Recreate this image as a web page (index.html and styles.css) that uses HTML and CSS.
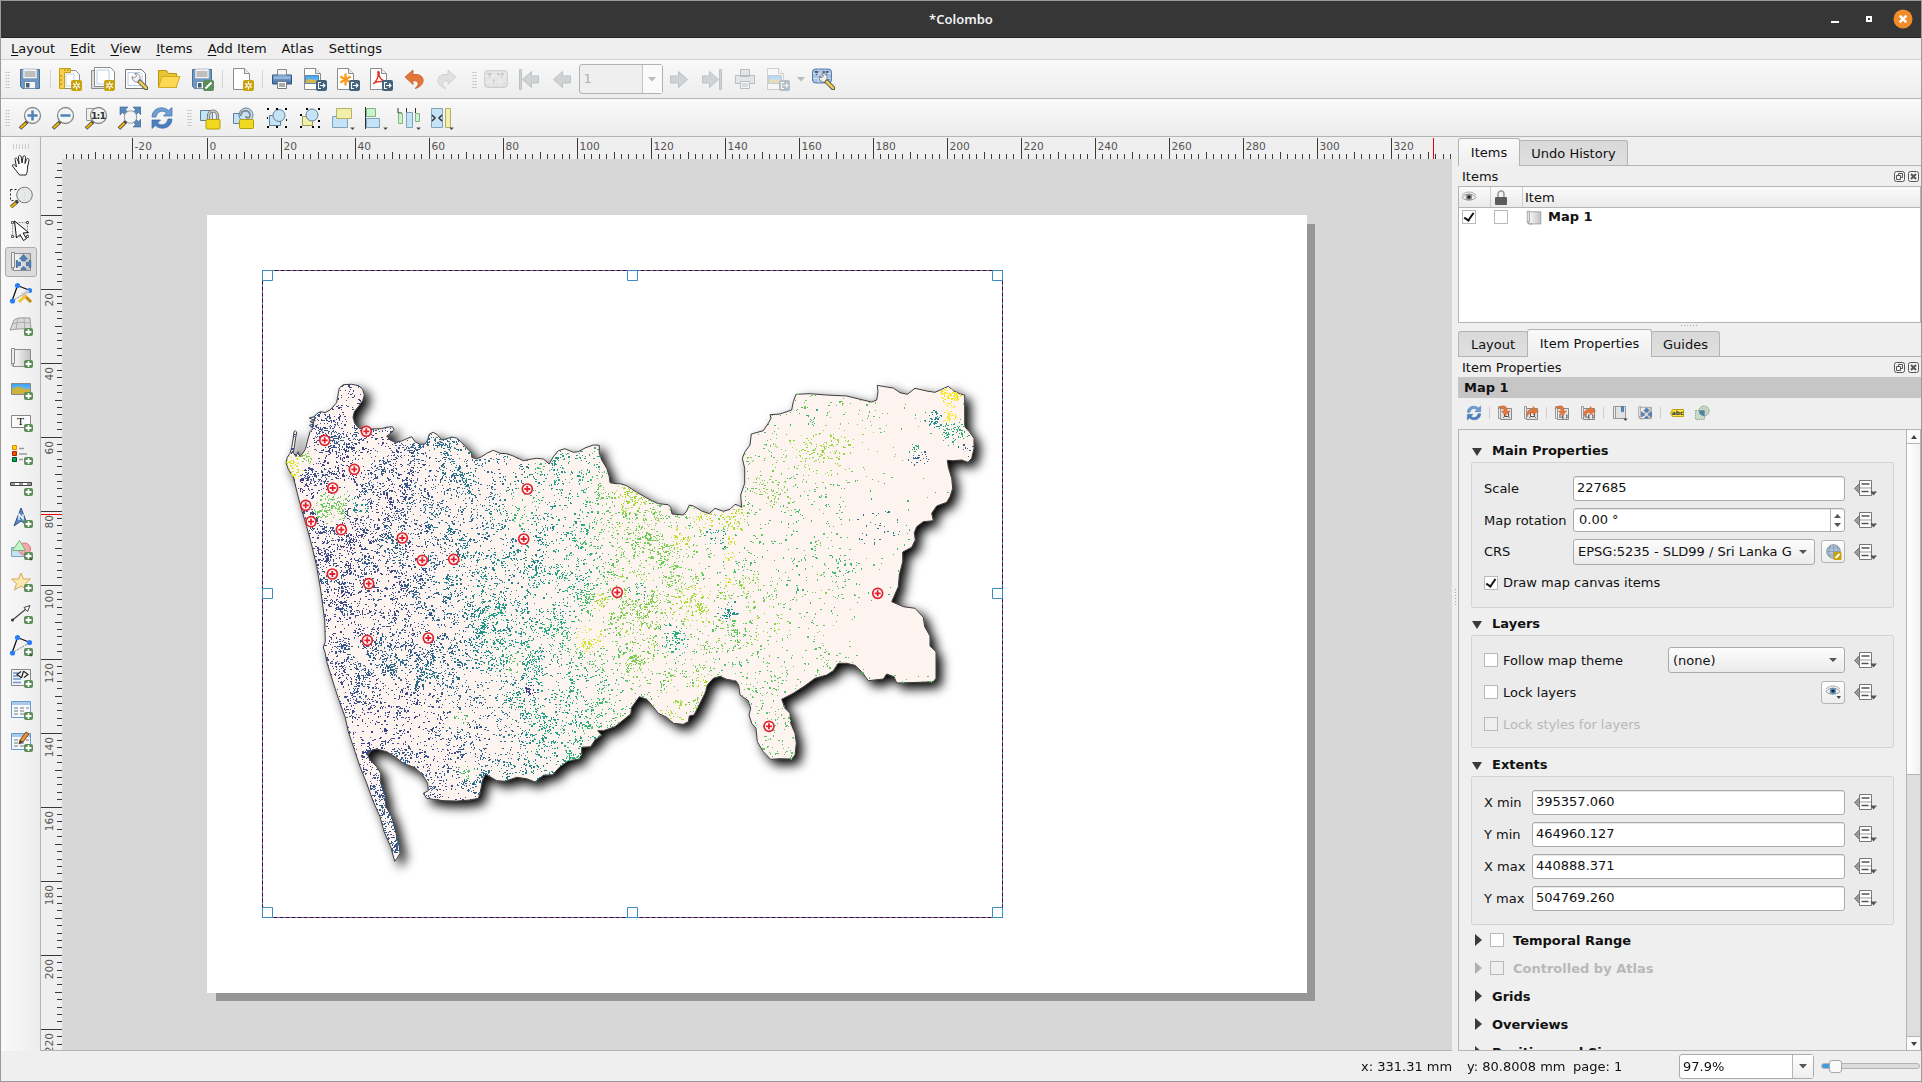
FILE: index.html
```html
<!DOCTYPE html>
<html lang="en">
<head>
<meta charset="utf-8">
<title>*Colombo</title>
<link rel="stylesheet" href="styles.css">
</head>
<body>
<svg class="defs" width="0" height="0">
  <defs>
    <linearGradient id="gsheet"><stop offset="0" stop-color="#fafafa"/><stop offset="1" stop-color="#c2c2c2"/></linearGradient>
    <linearGradient id="gsky" x2="0" y2="1"><stop offset="0" stop-color="#3ba0ee"/><stop offset="1" stop-color="#8fd0f2"/></linearGradient>
    <linearGradient id="gblue" x2="0" y2="1"><stop offset="0" stop-color="#8fb4dc"/><stop offset="1" stop-color="#3a6ba8"/></linearGradient>
    <symbol id="plus" viewBox="0 0 9 8"><rect width="9" height="8" rx="2" fill="#5b8c5a"/><path d="M4.500 1.300v5.400M1.600 4h5.800" stroke="#fff" stroke-width="1.800"/></symbol>
    <symbol id="gear" viewBox="0 0 11 11"><rect width="11" height="11" rx="2" fill="#c8a20a"/><path d="M5.500 1.500v8M2 3.500l7 4M2 7.500l7-4" stroke="#fff" stroke-width="1.300"/><circle cx="5.500" cy="5.500" r="1.600" fill="#c8a20a" stroke="#fff"/></symbol>
    <symbol id="exp" viewBox="0 0 11 11"><rect width="11" height="11" rx="2" fill="#42627c"/><path d="M5 2.500H2.500v6H5M4 5.500h5M7 3.500l2 2-2 2" stroke="#fff" fill="none" stroke-width="1.100"/></symbol>
    <symbol id="page" viewBox="0 0 24 24"><path d="M3.500 1.500h11l5 5v16h-16z" fill="#fff" stroke="#8c8c8c"/><path d="M14.500 1.500v5h5" fill="#eee" stroke="#8c8c8c"/></symbol>
    <symbol id="dd" viewBox="0 0 6 4"><path d="M0 .5h6L3 4z" fill="#444"/></symbol>
    <symbol id="glass" viewBox="0 0 24 24"><path d="M10 15L2 22.500" stroke="#4a4a4a" stroke-width="3.600"/><path d="M8 17L2.500 22" stroke="#f2b705" stroke-width="2"/><circle cx="14.500" cy="9.500" r="8" fill="#f3f5f5" stroke="#858a8a" stroke-width="1.300"/></symbol>

    <symbol id="i-save" viewBox="0 0 24 24"><path d="M2.500 2.500h19v19h-17l-2-2z" fill="#6d98c6" stroke="#4c7199"/><rect x="5" y="2" width="14" height="9.500" fill="#f4f4f4" stroke="#8da0b2" stroke-width=".6"/><path d="M6.500 5h11M6.500 7h11M6.500 9h11" stroke="#888"/><rect x="6.500" y="14.500" width="11" height="7" fill="#f4f4f4" stroke="#7890a8"/><rect x="8" y="16" width="3.500" height="4.500" fill="#42627c"/></symbol>
    <symbol id="i-saveas" viewBox="0 0 24 24"><use href="#i-save"/><rect x="13" y="13" width="11" height="11" rx="2" fill="#5b8c5a"/><path d="M15.500 21.500l6-6" stroke="#fff" stroke-width="2"/></symbol>
    <symbol id="i-newlayout" viewBox="0 0 24 24"><path d="M5.500 3.500h12l4 4v14h-16z" fill="#fff" stroke="#8c8c8c"/><path d="M8 7h8v12H8z" fill="none" stroke="#c2d4ee"/><path d="M1.500 1.500h11v4h-6v16h-5z" fill="#f5cf4c" stroke="#c8a20a"/><path d="M2 9h2M2 13h2M2 17h2M7 2v2M10 2v2" stroke="#a3850a"/><use href="#gear" x="13" y="13" width="11" height="11"/></symbol>
    <symbol id="i-dup" viewBox="0 0 24 24"><path d="M.5 3.500h3v16h15v2H.5z" fill="#ddd" stroke="#8c8c8c"/><path d="M3.500.5h16l4 4v15h-20z" fill="#fff" stroke="#8c8c8c"/><path d="M6 3h12v14H6z" fill="none" stroke="#b8cdec"/><use href="#gear" x="13" y="13" width="11" height="11"/></symbol>
    <symbol id="wrench" viewBox="0 0 18 18"><path d="M8 8l8 8" stroke="#555" stroke-width="4.600" stroke-linecap="round"/><path d="M9.500 9.500l6.300 6.300" stroke="#f0d050" stroke-width="2.800" stroke-linecap="round"/><path d="M1 4l3 1 2-2-2-2.500c4-.5 6 2.500 5.500 5.500L7 9.500C4 10 1 7.500 1 4z" fill="#f2f2f2" stroke="#777" stroke-width=".9"/></symbol>
    <symbol id="i-manager" viewBox="0 0 24 24"><path d="M1.500 2.500h16l4 4v15h-20z" fill="#fff" stroke="#777"/><path d="M4 5.500h12l2 2v11H4z" fill="none" stroke="#b8cdec"/><use href="#wrench" x="7" y="6" width="17" height="17"/></symbol>
    <symbol id="i-open" viewBox="0 0 24 24"><path d="M1.500 3.500h8l2 3h8v14h-18z" fill="#e9c535" stroke="#b8960f"/><path d="M5 9.500h18l-4 11H1.500z" fill="#fbd953" stroke="#d3ab1c"/></symbol>
    <symbol id="i-newpage" viewBox="0 0 24 24"><use href="#page"/><use href="#gear" x="13" y="13" width="11" height="11"/></symbol>
    <symbol id="i-print" viewBox="0 0 24 24"><path d="M7.500 2.500h9v7h-9z" fill="#f4f4f4" stroke="#8c8c8c"/><path d="M2.500 8h19v9h-19z" fill="url(#gblue)" stroke="#31597f"/><path d="M7.500 8h9M4 11h16" stroke="#c8dcf0" stroke-width=".8"/><path d="M7.500 14.500h9v7h-9z" fill="#fff" stroke="#777"/><path d="M9 17h6M9 19h6" stroke="#555"/></symbol>
    <symbol id="i-printg" viewBox="0 0 24 24"><g fill="#e3e5e7" stroke="#b9bdc0"><path d="M7.500 2.500h9v7h-9zM2.500 8.500h19v8h-19z"/><path d="M7.500 14.500h9v7h-9z" fill="#f6f6f6"/><path d="M9 17h6M9 19h6"/></g></symbol>
    <symbol id="pic" viewBox="0 0 16 10" preserveAspectRatio="none"><path d="M.5.500h15v9H.5z" fill="url(#gsky)" stroke="#5878a0"/><path d="M1 6l4-1.500 5 1 5 .5v3H1z" fill="#d2b94c"/></symbol>
    <symbol id="i-eimg" viewBox="0 0 24 24"><use href="#page" x="-2"/><use href="#pic" x="2" y="8" width="14" height="9"/><use href="#exp" x="13" y="13" width="11" height="11"/></symbol>
    <symbol id="i-esvg" viewBox="0 0 24 24"><use href="#page" x="-2"/><path d="M9.500 6.500v12M4.300 9.500l10.400 6M4.300 15.500l10.400-6" stroke="#f99b1c" stroke-width="2.300"/><use href="#exp" x="13" y="13" width="11" height="11"/></symbol>
    <symbol id="i-epdf" viewBox="0 0 24 24"><use href="#page" x="-2"/><path d="M4 17c3-2 6-7 5-11-1-2 2-2 1 1 0 4 3 7 7 7 2 2-6-1-12 2" fill="none" stroke="#e23b2e" stroke-width="1.500"/><use href="#exp" x="13" y="13" width="11" height="11"/></symbol>
    <symbol id="i-eimgg" viewBox="0 0 24 24"><g opacity=".35"><use href="#i-eimg" width="24" height="24"/></g></symbol>
    <symbol id="i-undo" viewBox="0 0 24 24"><path d="M3 10l8-7v4.500h4c9 1 8 12-2 14 5-4 4-8-2-8v4z" fill="#e2773b" stroke="#c65f26" stroke-width=".8"/></symbol>
    <symbol id="i-redo" viewBox="0 0 24 24"><path d="M21 10l-8-7v4.500H9C0 8.500 1 19.500 11 21.500c-5-4-4-8 2-8v4z" fill="#dfe1e1" stroke="#cbcdcd" stroke-width=".8"/></symbol>
    <symbol id="world" viewBox="0 0 24 18"><rect x=".7" y=".7" width="22.600" height="16.600" rx="3.500" fill="#a9c4e8" stroke="#4d74a8" stroke-width="1.200"/><path d="M3 3h6l-2 4-2 1zM8 9l3 1-2 5zM13 3h7l-1 4-3 1-2-3-1 1zM18 12h3v2z" fill="#4d6078"/><path d="M1 6h22M1 12h22M8 1v16M16 1v16" stroke="#e6eef8" stroke-width=".8"/></symbol>
    <symbol id="i-atlas" viewBox="0 0 24 24"><g opacity=".27" style="filter:grayscale(1)"><use href="#world" y="3" width="24" height="18"/></g></symbol>
    <symbol id="i-atlasset" viewBox="0 0 24 24"><use href="#world" x="1" y="1" width="20" height="16"/><use href="#wrench" x="7" y="6" width="17" height="17"/></symbol>
    <symbol id="i-prev" viewBox="0 0 24 24"><path d="M3.500 12.500l9-8v4.500h8v7h-8v4.500z" fill="#cfd3d6" stroke="#bcc1c4"/></symbol>
    <symbol id="i-next" viewBox="0 0 24 24"><path d="M20.500 12.500l-9-8v4.500h-8v7h8v4.500z" fill="#cfd3d6" stroke="#bcc1c4"/></symbol>
    <symbol id="i-first" viewBox="0 0 24 24"><path d="M2.500 2.500h2v20h-2zM5.500 12.500l9-8v4.500h7v7h-7v4.500z" fill="#cfd3d6" stroke="#bcc1c4"/></symbol>
    <symbol id="i-last" viewBox="0 0 24 24"><path d="M19.500 2.500h2v20h-2zM18.500 12.500l-9-8v4.500h-7v7h7v4.500z" fill="#cfd3d6" stroke="#bcc1c4"/></symbol>

    <symbol id="i-zin" viewBox="0 0 24 24"><use href="#glass"/><path d="M14.500 4.500v10M9.500 9.500h10" stroke="#4f7fb8" stroke-width="2.500"/></symbol>
    <symbol id="i-zout" viewBox="0 0 24 24"><use href="#glass"/><path d="M9.500 9.500h10" stroke="#4f7fb8" stroke-width="2.500"/></symbol>
    <symbol id="i-z11" viewBox="0 0 24 24"><path d="M2.500 2.500h9v12h-9z" fill="#f0f0f0" stroke="#999"/><use href="#glass"/><text x="14" y="13" font-size="9.500" font-weight="bold" text-anchor="middle" fill="#333" letter-spacing="-1">1:1</text></symbol>
    <symbol id="i-zfull" viewBox="0 0 24 24"><path d="M4 1h7L8.500 3.500l3 3-3 3-3-3L3 9V1zM23 1h-7l2.500 2.500-3 3 3 3 3-3L24 9V1zM24 21h-8l2.500-2.500-3-3 3-3 3 3L24 13z" fill="#5b86b8" stroke="#3f6797" stroke-width=".6"/><path d="M10 14.500l-8 8" stroke="#444" stroke-width="3.600"/><path d="M7.500 17L2.500 22" stroke="#f2b705" stroke-width="2"/><circle cx="13.500" cy="11" r="6.200" fill="#f3f5f5" stroke="#999"/></symbol>
    <symbol id="i-refresh" viewBox="0 0 24 24"><path d="M2 11C2 2 13-1 18.500 4.500L22 1.500V10h-8.500l3-3C12 3 7 6 6 11z" fill="#6e9fd4" stroke="#3e6ea6" stroke-width=".7"/><path d="M22 13c0 9-11 12-16.500 6.500L2 22.500V14h8.500l-3 3c4.500 4 9.500 1 10.500-4z" fill="#4a7fbe" stroke="#3e6ea6" stroke-width=".7"/></symbol>
    <symbol id="padlock" viewBox="0 0 16 21"><path d="M3.500 11V7a4.500 5 0 0 1 9 0v4" fill="none" stroke="#777" stroke-width="3.200"/><path d="M3.500 11V7a4.500 5 0 0 1 9 0v4" fill="none" stroke="#ccc" stroke-width="1.500"/><rect x="1" y="10.500" width="14" height="9.500" rx="1" fill="#f0d91e" stroke="#b39f0c"/></symbol>
    <symbol id="i-lock" viewBox="0 0 24 24"><path d="M1.500 4.500h12v10h-12z" fill="#c5e3f6" stroke="#5c8199"/><use href="#padlock" x="6" y="3" width="16" height="21"/></symbol>
    <symbol id="i-unlock" viewBox="0 0 24 24"><path d="M1.500 7.500h8v10h-8z" fill="#c5e3f6" stroke="#5c8199"/><circle cx="14" cy="9" r="7" fill="#c5e3f6" stroke="#5c8199"/><path d="M9 10c-1-7 10-7 9 0-1 3-4 2-4 0" fill="none" stroke="#888" stroke-width="2"/><rect x="7.500" y="13.500" width="14" height="9" rx="1" fill="#f0d91e" stroke="#b39f0c"/></symbol>
    <symbol id="i-group" viewBox="0 0 24 24"><path d="M4.500 9.500h11v10h-11z" fill="#c5e3f6" stroke="#5c8199"/><circle cx="14" cy="9.500" r="6" fill="#c5e3f6" stroke="#5c8199"/><path d="M2 3h2M20 3h2M2 21h2M20 21h2M2 12h1M21 14h1M11 3h2M11 21h2" stroke="#000" stroke-width="2"/></symbol>
    <symbol id="i-ungroup" viewBox="0 0 24 24"><path d="M4.500 10.500h10v9h-10z" fill="#f2efa8" stroke="#a09b4c"/><circle cx="14" cy="9" r="6" fill="#c5e3f6" stroke="#5c8199"/><path d="M2 9h2M8 3h2M20 3h2M2 21h2M14 21h2M20 15h2M20 21h2" stroke="#000" stroke-width="2"/></symbol>
    <symbol id="i-raise" viewBox="0 0 24 24"><path d="M1.500 10.500h15v11h-15z" fill="#c5e3f6" stroke="#7ea2bc"/><path d="M5.500 2.500h15v10h-15z" fill="#f2efa8" stroke="#b5b06a"/><use href="#dd" x="19" y="21" width="5" height="3"/></symbol>
    <symbol id="i-align" viewBox="0 0 24 24"><path d="M1.500 1v22" stroke="#333" stroke-width="1"/><path d="M2.500 2.500h9v8h-9z" fill="#c5f5c8" stroke="#83b487"/><path d="M2.500 12.500h13v9h-13z" fill="#c5e3f6" stroke="#7ea2bc"/><use href="#dd" x="19" y="21" width="5" height="3"/></symbol>
    <symbol id="i-dist" viewBox="0 0 24 24"><path d="M1 2v5h4M9.500 2v5M18.500 2v5" stroke="#333" fill="none"/><path d="M1.500 7.500h4v10h-4zM18.500 7.500h4v8h-4z" fill="#c5f5c8" stroke="#83b487"/><path d="M9.500 6.500h6v15h-6z" fill="#c5e3f6" stroke="#7ea2bc"/><use href="#dd" x="19" y="21" width="5" height="3"/></symbol>
    <symbol id="i-resize" viewBox="0 0 24 24"><path d="M1.500 2.500h11v19h-11z" fill="#c5e3f6" stroke="#7ea2bc"/><path d="M15.500 2.500h5v19h-5z" fill="#f2efa8" stroke="#b5b06a"/><path d="M2 9l3 3-3 3M12 9l-3 3 3 3" fill="none" stroke="#333" stroke-width="1.500"/><use href="#dd" x="19" y="21" width="5" height="3"/></symbol>

    <symbol id="i-hand" viewBox="0 0 24 24"><path d="M9 22c-2-3-5-6-7-9-.5-2 2-2 4 1L4.500 6.500c0-2 2-2 2.500 0L8.500 11 8 4c0-2 2.300-2 2.700 0L11.500 10l1-6c.3-2 2.500-1.600 2.500.3l-.5 6.200 1.500-4c.7-2 2.700-1 2.500.8L17 14c0 4-.5 6-1.500 8z" transform="translate(1.500 -1)" fill="#fff" stroke="#222" stroke-width="1"/></symbol>
    <symbol id="i-zoom" viewBox="0 0 24 24"><path d="M1.500 3.500h14v11h-14z" fill="none" stroke="#222" stroke-dasharray="2 2"/><path d="M9 15l-7 6" stroke="#444" stroke-width="3.500"/><path d="M7 17l-5 4" stroke="#f2b705" stroke-width="2"/><circle cx="15.500" cy="9" r="7.800" fill="#e6e8e8" fill-opacity=".92" stroke="#777"/></symbol>
    <symbol id="i-select" viewBox="0 0 24 24"><path d="M3.500 4.500h15v14h-15z" fill="#eee" stroke="#999" stroke-dasharray="2 1"/><path d="M2.500 3.500h2v2h-2zM17.500 3.500h2v2h-2zM2.500 17.500h2v2h-2zM17.500 17.500h2v2h-2z" fill="#fff" stroke="#555"/><path d="M5.500 3l2 17 3.500-3.500 3.500 6 3-2-3.500-5.500 5.500-.5z" fill="#fff" stroke="#111"/></symbol>
    <symbol id="sheet" viewBox="0 0 24 24"><path d="M4.500 3.500h17v17h-17z" fill="url(#gsheet)" stroke="#8c8c8c"/><path d="M2.500 2.500h3v15h-3z" fill="#eee" stroke="#8c8c8c"/><path d="M2.500 17.500q0 3 3 3h4" fill="none" stroke="#8c8c8c"/></symbol>
    <symbol id="fourway" viewBox="0 0 16 16"><path d="M8 .5L12 5H9.800v2H6.200V5H4zM5.500 15.500v-1L8 12.500l2.500 2v1zM.5 6.500h1.500v1.700h3v3.600h-3v1.700H.5zM15.500 6.500H14v1.700h-3v3.600h3v1.700h1.500z" fill="#4f81bb" stroke="#2f5b8f" stroke-width=".6"/></symbol>
    <symbol id="i-move" viewBox="0 0 24 24"><use href="#sheet" width="24" height="24"/><use href="#fourway" x="6.500" y="4" width="16" height="16"/></symbol>
    <symbol id="tri" viewBox="0 0 24 24"><path d="M3 19L8.500 3.500 21 8.500" fill="none" stroke="#111" stroke-width="1.300"/><path d="M3 19L21 8.500" stroke="#777" stroke-dasharray="2 1"/><circle cx="3.500" cy="19" r="2.600" fill="#2b7df5"/><circle cx="8.500" cy="3.500" r="2.600" fill="#2b7df5"/><circle cx="20.500" cy="8.500" r="2.600" fill="#2b7df5"/></symbol>
    <symbol id="i-nodes" viewBox="0 0 24 24"><use href="#tri"/><path d="M15 13l7 7" stroke="#c58a10" stroke-width="3"/><path d="M17 13l-7 7" stroke="#f2c530" stroke-width="3"/><path d="M20 9l-7 4" stroke="#c8c8c8" stroke-width="3"/></symbol>
    <symbol id="i-3d" viewBox="0 0 24 24"><path d="M5 6c4-3 10-2 16-2l1 12c-7-2-14-1-21 0z" fill="#d9d9d9" stroke="#999"/><path d="M4 10c6-3 12-1 18-1M9 4L7 15M15 4l1 12" fill="none" stroke="#aaa"/><use href="#plus" x="15" y="14" width="9" height="8"/></symbol>
    <symbol id="i-map" viewBox="0 0 24 24"><use href="#sheet" width="24" height="24"/><use href="#plus" x="15" y="14" width="9" height="8"/></symbol>
    <symbol id="i-pic" viewBox="0 0 24 24"><path d="M2.500 5.500h19v11h-19z" fill="url(#gsky)" stroke="#888"/><path d="M3 11l6-2.500 8 2.500 4 .5V16H3z" fill="#cbb33e"/><use href="#plus" x="15" y="14" width="9" height="8"/></symbol>
    <symbol id="i-label" viewBox="0 0 24 24"><path d="M2.500 5.500h19v12h-19z" fill="#fafafa" stroke="#888"/><text x="11.500" y="15" text-anchor="middle" class="serif" font-size="10">T</text><use href="#plus" x="15" y="14" width="9" height="8"/></symbol>
    <symbol id="i-legend" viewBox="0 0 24 24"><path d="M3.500 3.500h4v4h-4z" fill="#ffd500" stroke="#e08a00"/><path d="M3.500 9.500h4v4h-4z" fill="#ff4b0a" stroke="#a02a00"/><path d="M3.500 15.500h4v4h-4z" fill="#00a854" stroke="#004e28"/><path d="M10 6.500h5M10 12h8M10 17.500h4" stroke="#999" stroke-width="1.500"/><use href="#plus" x="15" y="15" width="9" height="8"/></symbol>
    <symbol id="i-scale" viewBox="0 0 24 24"><path d="M1.500 8.500h21v3h-21z" fill="#fff" stroke="#444"/><path d="M2 10h4M10 10h4M18 10h4" stroke="#999" stroke-width="2"/><use href="#plus" x="15" y="14" width="9" height="8"/></symbol>
    <symbol id="i-north" viewBox="0 0 24 24"><path d="M12 2l7 18-7-5-7 5z" fill="#5b8bc0" stroke="#2d5580"/><path d="M10 14V8l4 5V8" fill="none" stroke="#fff" stroke-width="1.300"/><use href="#plus" x="15" y="14" width="9" height="8"/></symbol>
    <symbol id="i-shape" viewBox="0 0 24 24"><path d="M2.500 9.500h13v9h-13z" fill="#c5e3f6" stroke="#7ea2bc"/><circle cx="15.500" cy="11" r="6" fill="#f6a9a9" stroke="#d97878"/><path d="M10.500 2.500l6 10h-13z" fill="#c5f5c8" stroke="#76b07b"/><use href="#plus" x="15" y="14" width="9" height="8"/><use href="#dd" x="20" y="20" width="4" height="3"/></symbol>
    <symbol id="i-star" viewBox="0 0 24 24"><path d="M12 3l2.500 6h7l-5 4.500 2 6.500-6.500-4-6.500 4 2-6.500-5-4.500h7z" fill="#fbe9b0" stroke="#dca55e"/><use href="#plus" x="15" y="14" width="9" height="8"/></symbol>
    <symbol id="i-arrow" viewBox="0 0 24 24"><path d="M3 18.500L17 7" stroke="#444" stroke-width="1.200"/><circle cx="3.500" cy="18" r="1.500" fill="#333"/><path d="M21 3.500l-6 2 3.500 4z" fill="#fff" stroke="#444"/><use href="#plus" x="15" y="14" width="9" height="8"/></symbol>
    <symbol id="i-poly" viewBox="0 0 24 24"><use href="#tri"/><use href="#plus" x="15" y="14" width="9" height="8"/><use href="#dd" x="20" y="20" width="4" height="3"/></symbol>
    <symbol id="i-html" viewBox="0 0 24 24"><path d="M2.500 3.500h19v16h-19z" fill="#f4f4f4" stroke="#888"/><path d="M4 7h5M4 10h5M4 13h8M4 16.500h8" stroke="#6a98d0" stroke-width="1.500"/><path d="M12 5.500L8 8.500l4 3M15 5.500l4 3-4 3M14.500 5l-2 7" stroke="#222" fill="none" stroke-width="1.200"/><use href="#plus" x="15" y="14" width="9" height="8"/></symbol>
    <symbol id="table" viewBox="0 0 24 24"><path d="M2.500 3.500h19v16h-19z" fill="#f6f9fd" stroke="#6a98d0"/><path d="M3 5.500h18" stroke="#a9c8ea" stroke-width="3"/><path d="M5 10h4M11 10h4M17 10h3M5 13h4M11 13h4M5 16h4M11 16h4" stroke="#777" stroke-width="1.200"/></symbol>
    <symbol id="i-table" viewBox="0 0 24 24"><use href="#table"/><use href="#plus" x="15" y="14" width="9" height="8"/></symbol>
    <symbol id="i-ftable" viewBox="0 0 24 24"><use href="#table"/><path d="M10 14l1-4 6-8 3 2-6 8z" fill="#e7913c" stroke="#80501c"/><path d="M10 14l1-4 3 2z" fill="#444"/><use href="#plus" x="15" y="14" width="9" height="8"/></symbol>

    <symbol id="i-float" viewBox="0 0 11 11"><rect x=".5" y=".5" width="10" height="10" rx="2" fill="#f4f4f4" stroke="#555"/><path d="M4.500 4.500v-2h4v4h-2M2.500 4.500h4v4h-4z" fill="none" stroke="#555"/></symbol>
    <symbol id="i-close" viewBox="0 0 11 11"><rect x=".5" y=".5" width="10" height="10" rx="2" fill="#f4f4f4" stroke="#555"/><path d="M3 3l5 5M8 3L3 8" stroke="#555" stroke-width="2"/></symbol>
    <symbol id="i-eye" viewBox="0 0 16 12"><path d="M1 6.500C4 2 12 2 15 6.500 12 10 4 10 1 6.500z" fill="#f4f4f4" stroke="#999"/><path d="M1 4c4-4 10-4 14 0" fill="none" stroke="#aaa"/><circle cx="8" cy="6" r="3.200" fill="var(--iris,#8a8f8f)"/><circle cx="8" cy="6" r="1.600" fill="#222"/></symbol>
    <symbol id="i-padg" viewBox="0 0 12 15"><path d="M3 8V4.500a3 3.500 0 0 1 6 0V8" fill="none" stroke="#999" stroke-width="1.600"/><rect y="7" width="12" height="8" rx="1" fill="#5c5c5c"/></symbol>
    <symbol id="toview" viewBox="0 0 16 16"><path d="M3.500 3.500h11v11h-11z" fill="#e0e0e0" stroke="#888"/><path d="M1.500 1.500h2v12h-2z" fill="#eee" stroke="#999"/><path d="M6 6l7 7M13 6l-7 7" stroke="#777"/><path d="M7.500 7.500h4v4h-4z" fill="#f4f4f4" stroke="#555"/></symbol>
    <symbol id="tonum" viewBox="0 0 16 16"><path d="M3.500 3.500h11v11h-11z" fill="#e6e6e6" stroke="#888"/><path d="M1.500 1.500h2v12h-2z" fill="#eee" stroke="#999"/><path d="M6 9v4M8 10h1v1.500H8V13h2M12 10h1v3h-1" stroke="#555" fill="none"/></symbol>
    <symbol id="arrin" viewBox="0 0 16 16"><path d="M1 4C4-1 11 0 10 6h2.500L8.500 11 4.500 6H7C7 3 4 2 1 4z" fill="#e2773b" stroke="#c65f26" stroke-width=".4"/></symbol>
    <symbol id="arrout" viewBox="0 0 16 16"><path d="M4 12c-1-5 1-8 6-8V1.500L15.500 6 10 10V7.500C7 7.500 5 9 4 12z" fill="#e2773b" stroke="#c65f26" stroke-width=".4"/></symbol>
    <symbol id="p-in1" viewBox="0 0 16 16"><use href="#toview"/><use href="#arrin"/></symbol>
    <symbol id="p-out1" viewBox="0 0 16 16"><use href="#toview"/><use href="#arrout"/></symbol>
    <symbol id="p-in2" viewBox="0 0 16 16"><use href="#tonum"/><use href="#arrin"/></symbol>
    <symbol id="p-out2" viewBox="0 0 16 16"><use href="#tonum"/><use href="#arrout"/></symbol>
    <symbol id="p-book" viewBox="0 0 16 16"><path d="M3.500 1.500h10v12h-10z" fill="#e2e2e2" stroke="#999"/><path d="M1.500 1.500h2v12h-2z" fill="#eee" stroke="#999"/><path d="M9 1h3v6.500l-1.500-1-1.500 1z" fill="#4f81bb"/><use href="#dd" x="11" y="13" width="5" height="3"/></symbol>
    <symbol id="p-move" viewBox="0 0 16 16"><use href="#sheet" width="16" height="16"/><use href="#fourway" x="4" y="2" width="11" height="12"/></symbol>
    <symbol id="p-abc" viewBox="0 0 16 16"><path d="M3.500 4.500h11v7h-11L1.500 8z" fill="#fbe64a" stroke="#c0a410" stroke-linejoin="round"/><text x="8.700" y="10.300" text-anchor="middle" font-size="6" font-weight="bold" fill="#333">abc</text></symbol>
    <symbol id="p-clip" viewBox="0 0 16 16"><circle cx="10" cy="6" r="5.200" fill="#c3d4c0" stroke="#8aa886" stroke-dasharray="1.500 1"/><path d="M1.500 5.500h9v9h-9z" fill="#c3d4c0" fill-opacity=".8" stroke="#8aa886" stroke-dasharray="1.500 1"/><path d="M5 5.500h5.500V11A5 5 0 0 1 5 5.500z" fill="#4f81a8"/></symbol>
    <symbol id="i-ddef" viewBox="0 0 24 18"><path d="M6.500 4.500L1.500 9.500l5 5z" fill="#9a9a9a" stroke="#777"/><path d="M6.500 1.500h12v15h-12z" fill="#fff" stroke="#777"/><path d="M8.500 5h8M8.500 12.500h7" stroke="#555" stroke-width="1.300"/><path d="M7 9h11" stroke="#999"/><path d="M17 12.500h7l-3.500 4z" fill="#555"/></symbol>
    <symbol id="i-globe" viewBox="0 0 16 16"><circle cx="8" cy="7.500" r="6.800" fill="#a9c8e8" stroke="#8a8f94"/><path d="M1.500 7.500h13M8 1v13M3 4h10M3 11h10M5 1.500c-2 4-2 8 0 12M11 1.500c2 4 2 8 0 12" stroke="#8a9098" fill="none" stroke-width=".7"/><rect x="8" y="8" width="8" height="8" rx="1" fill="#c8a20a"/><path d="M10 14l4-4" stroke="#fff" stroke-width="1.800"/></symbol>
  </defs>
</svg>

<div class="window">
  <header class="titlebar">
    <h1>*Colombo</h1>
    <div class="wbtns"><i class="min"></i><i class="max"></i><svg width="20" height="20" viewBox="0 0 20 20"><circle cx="10" cy="10" r="9.500" fill="#f28b2a"/><path d="M6.700 6.700l6.600 6.600M13.300 6.700l-6.600 6.600" stroke="#fff" stroke-width="2.400"/></svg></div>
  </header>
  <nav class="menubar">
    <span><u>L</u>ayout</span><span><u>E</u>dit</span><span><u>V</u>iew</span><span><u>I</u>tems</span><span><u>A</u>dd Item</span><span>Atlas</span><span>Settings</span>
  </nav>
  <div class="toolbar row1">
    <i class="grip"></i>
    <b><svg><use href="#i-save"/></svg></b><i class="sep"></i>
    <b><svg><use href="#i-newlayout"/></svg></b><b><svg><use href="#i-dup"/></svg></b><b><svg><use href="#i-manager"/></svg></b><b><svg><use href="#i-open"/></svg></b><b><svg><use href="#i-saveas"/></svg></b><i class="sep"></i>
    <b><svg><use href="#i-newpage"/></svg></b><i class="sep"></i>
    <b><svg><use href="#i-print"/></svg></b><b><svg><use href="#i-eimg"/></svg></b><b><svg><use href="#i-esvg"/></svg></b><b><svg><use href="#i-epdf"/></svg></b><b><svg><use href="#i-undo"/></svg></b><b><svg><use href="#i-redo"/></svg></b>
    <i class="grip second"></i>
    <b><svg><use href="#i-atlas"/></svg></b><b><svg><use href="#i-first"/></svg></b><b><svg><use href="#i-prev"/></svg></b>
    <div class="atlasbox"><span>1</span><em><svg width="8" height="5"><path d="M0 0h8L4 4.500z" fill="#bbb"/></svg></em></div>
    <b><svg><use href="#i-next"/></svg></b><b><svg><use href="#i-last"/></svg></b><b><svg><use href="#i-printg"/></svg></b><b><svg><use href="#i-eimgg"/></svg></b>
    <em class="arrow"><svg width="8" height="5"><path d="M0 0h8L4 4.500z" fill="#bbb"/></svg></em>
    <b><svg><use href="#i-atlasset"/></svg></b>
  </div>
  <div class="toolbar row2">
    <i class="grip"></i>
    <b><svg><use href="#i-zin"/></svg></b><b><svg><use href="#i-zout"/></svg></b><b><svg><use href="#i-z11"/></svg></b><b><svg><use href="#i-zfull"/></svg></b><b><svg><use href="#i-refresh"/></svg></b>
    <i class="grip second"></i>
    <b><svg><use href="#i-lock"/></svg></b><b><svg><use href="#i-unlock"/></svg></b><b><svg><use href="#i-group"/></svg></b><b><svg><use href="#i-ungroup"/></svg></b><b><svg><use href="#i-raise"/></svg></b><b><svg><use href="#i-align"/></svg></b><b><svg><use href="#i-dist"/></svg></b><b><svg><use href="#i-resize"/></svg></b>
  </div>

  <main class="workspace">
    <aside class="toolbox">
      <i class="hgrip"></i>
      <b><svg><use href="#i-hand"/></svg></b><b><svg><use href="#i-zoom"/></svg></b><b><svg><use href="#i-select"/></svg></b><b class="on"><svg><use href="#i-move"/></svg></b><b><svg><use href="#i-nodes"/></svg></b><b><svg><use href="#i-3d"/></svg></b><b><svg><use href="#i-map"/></svg></b><b><svg><use href="#i-pic"/></svg></b><b><svg><use href="#i-label"/></svg></b><b><svg><use href="#i-legend"/></svg></b><b><svg><use href="#i-scale"/></svg></b><b><svg><use href="#i-north"/></svg></b><b><svg><use href="#i-shape"/></svg></b><b><svg><use href="#i-star"/></svg></b><b><svg><use href="#i-arrow"/></svg></b><b><svg><use href="#i-poly"/></svg></b><b><svg><use href="#i-html"/></svg></b><b><svg><use href="#i-table"/></svg></b><b><svg><use href="#i-ftable"/></svg></b>
    </aside>

    <section class="view">
      <svg class="hruler" id="hruler" width="1411" height="22"></svg>
      <svg class="vruler" id="vruler" width="21" height="891"></svg>
      <div class="canvas">
        <div class="paper">
          <div class="mapitem">
            <svg class="land" width="741" height="647">
              <defs><filter id="shade" x="-10%" y="-10%" width="120%" height="120%"><feDropShadow dx="5.500" dy="5.500" stdDeviation="5.500" flood-color="#000"/></filter></defs>
              <path id="outline" fill="#fef4ef" stroke="#3c3c3c" stroke-width="1" filter="url(#shade)"/>
            </svg>
            <canvas id="dots" width="741" height="647"></canvas>
            <svg class="over" id="over" width="741" height="647">
              <defs><g id="poi"><circle r="5" fill="#fff" stroke="#e3202b" stroke-width="1.700"/><path d="M-3 0h6M0-3v6" stroke="#e3202b" stroke-width="1.800"/></g></defs>
              <g id="pois"></g>
              <rect x=".5" y="-.5" width="740" height="647" fill="none" stroke="#4a94cc"/>
              <rect x=".5" y="-.5" width="740" height="647" fill="none" stroke="#540030" stroke-dasharray="4 2"/>
              <g fill="#fff" stroke="#3a8cc4"><path d="M.5-.5h10v10H.5zM365.500-.5h10v10h-10zM730.500-.5h10v10h-10zM.5 317.500h10v10H.5zM730.500 317.500h10v10h-10zM.5 636.500h10v10H.5zM365.500 636.500h10v10h-10zM730.500 636.500h10v10h-10z"/></g>
            </svg>
          </div>
        </div>
      </div>
    </section>

    <div class="vsplit"><i></i></div>

    <aside class="docks">
      <div class="tabs"><span class="active t1">Items</span><span class="t2">Undo History</span></div>
      <div class="docktitle">Items<svg width="11" height="11"><use href="#i-float"/></svg><svg width="11" height="11"><use href="#i-close"/></svg></div>
      <div class="tree">
        <div class="thead"><span class="c1"><svg width="16" height="12"><use href="#i-eye"/></svg></span><span class="c2"><svg width="12" height="15"><use href="#i-padg"/></svg></span><span class="c3">Item</span></div>
        <div class="trow"><i class="cb on"></i><i class="cb"></i><svg width="16" height="15" viewBox="1 1 22 21"><use href="#sheet" width="24" height="24"/></svg><strong>Map 1</strong></div>
      </div>
      <div class="hsplit"><i></i></div>
      <div class="tabs"><span class="t3">Layout</span><span class="active t4">Item Properties</span><span class="t5">Guides</span></div>
      <div class="docktitle">Item Properties<svg width="11" height="11"><use href="#i-float"/></svg><svg width="11" height="11"><use href="#i-close"/></svg></div>
      <div class="itemname">Map 1</div>
      <div class="ptools">
        <svg><use href="#i-refresh"/></svg><i></i><svg><use href="#p-in1"/></svg><svg><use href="#p-out1"/></svg><i></i><svg><use href="#p-in2"/></svg><svg><use href="#p-out2"/></svg><i></i><svg><use href="#p-book"/></svg><svg><use href="#p-move"/></svg><i></i><svg><use href="#p-abc"/></svg><svg><use href="#p-clip"/></svg>
      </div>
      <div class="props">
        <div class="plist">
          <h2 class="open">Main Properties</h2>
          <div class="group g1">
            <div class="line"><label>Scale</label><span class="input">227685</span><svg class="dd"><use href="#i-ddef"/></svg></div>
            <div class="line rot"><label>Map rotation</label><span class="input spin">0.00 °<em><svg width="7" height="4"><path d="M0 4h7L3.500 0z" fill="#555"/></svg><svg width="7" height="4"><path d="M0 0h7L3.500 4z" fill="#555"/></svg></em></span><svg class="dd"><use href="#i-ddef"/></svg></div>
            <div class="line"><label>CRS</label><span class="combo"><q>EPSG:5235 - SLD99 / Sri Lanka Grid</q></span><span class="btn"><svg width="17" height="16"><use href="#i-globe"/></svg></span><svg class="dd"><use href="#i-ddef"/></svg></div>
            <div class="line"><i class="cb on"></i>Draw map canvas items</div>
          </div>
          <h2 class="open">Layers</h2>
          <div class="group g2">
            <div class="line"><i class="cb"></i>Follow map theme<span class="combo theme"><q>(none)</q></span><svg class="dd"><use href="#i-ddef"/></svg></div>
            <div class="line"><i class="cb"></i>Lock layers<span class="btn eye"><svg width="16" height="14" viewBox="0 0 16 14"><use href="#i-eye" width="16" height="12"/><path d="M11.500 11h4.500l-2.200 3z" fill="#444"/></svg></span><svg class="dd"><use href="#i-ddef"/></svg></div>
            <div class="line dis"><i class="cb"></i>Lock styles for layers</div>
          </div>
          <h2 class="open">Extents</h2>
          <div class="group g3">
            <div class="line"><label>X min</label><span class="input">395357.060</span><svg class="dd"><use href="#i-ddef"/></svg></div>
            <div class="line"><label>Y min</label><span class="input">464960.127</span><svg class="dd"><use href="#i-ddef"/></svg></div>
            <div class="line"><label>X max</label><span class="input">440888.371</span><svg class="dd"><use href="#i-ddef"/></svg></div>
            <div class="line"><label>Y max</label><span class="input">504769.260</span><svg class="dd"><use href="#i-ddef"/></svg></div>
          </div>
          <h3><i class="cb"></i>Temporal Range</h3>
          <h3 class="dis"><i class="cb"></i>Controlled by Atlas</h3>
          <h3>Grids</h3>
          <h3>Overviews</h3>
          <h3>Position and Size</h3>
        </div>
        <div class="scroll"><em class="up"></em><div class="thumb"></div><div class="track"></div><em class="down"></em></div>
      </div>
    </aside>
  </main>

  <footer class="status">
    <span class="sx">x: 331.31 mm</span><span class="sy">y: 80.8008 mm</span><span class="sp">page: 1</span>
    <div class="zoom"><span>97.9%</span><em><svg width="8" height="5"><path d="M0 0h8L4 4.500z" fill="#555"/></svg></em></div>
    <div class="slider"><i></i></div>
  </footer>
</div>
<script src="main.js"></script>
</body>
</html>
```

FILE: styles.css
```css
* { box-sizing: border-box; }
body { margin: 0; font: 13px "DejaVu Sans", sans-serif; color: #111; }
b, i, em, u, q { font-weight: normal; font-style: normal; }
q { quotes: none; }
h1, h2, h3 { margin: 0; font-size: 13px; }
svg { display: block; flex: none; }
svg text { font-family: "DejaVu Sans", sans-serif; }
svg text.serif { font-family: "DejaVu Serif", serif; }
.defs { position: absolute; }

.window { width: 1922px; height: 1082px; border: 1px solid #9a9a9a; background: #efefef; display: flex; flex-direction: column; overflow: hidden; }

.titlebar { height: 37px; background: #363636; border-bottom: 1px solid #222; display: grid; grid-template-columns: 1fr auto 1fr; align-items: center; flex: none; }
.titlebar h1 { grid-column: 2; font: 600 13px "Noto Sans", sans-serif; color: #f2f2f2; }
.wbtns { display: flex; justify-content: flex-end; align-items: center; padding-right: 8px; }
.wbtns .min { width: 8px; height: 2px; background: #fff; margin: 6px 27px 0 0; }
.wbtns .max { width: 6px; height: 6px; border: 2px solid #fff; margin-right: 21px; }

.menubar { height: 22px; display: flex; align-items: center; gap: 15px; padding-left: 10px; border-bottom: 1px solid #d0d0d0; flex: none; }
.menubar span { line-height: 20px; }
.menubar u { text-underline-offset: 2px; }

.toolbar { display: flex; align-items: center; background: linear-gradient(#f9f9f9, #ededed); border-bottom: 1px solid #b4b4b4; flex: none; }
.row1 { height: 39px; }
.row2 { height: 38px; }
.toolbar b { width: 33px; display: flex; justify-content: center; flex: none; }
.toolbar b svg, .toolbox b svg { width: 24px; height: 24px; }
.grip { width: 5px; height: 17px; margin: 0 3.500px 0 4px; background: radial-gradient(circle, #b0b0b0 .7px, transparent .9px) 0 0 / 2.500px 3px; flex: none; }
.grip.second { margin: 0 2.500px 0 8.500px; }
.sep { width: 1px; height: 18px; background: #d4d4d4; margin: 0 3px; flex: none; }
.atlasbox { width: 84px; height: 30px; border: 1px solid #b2b2b2; border-radius: 3px; display: flex; background: #efefef; color: #b0b0b0; flex: none; }
.atlasbox span { flex: 1; padding: 6px 4px; }
.atlasbox em { width: 20px; border-left: 1px solid #c4c4c4; background: #fafafa; display: flex; align-items: center; justify-content: center; }
.toolbar .arrow { width: 12px; display: flex; justify-content: center; }

.workspace { display: flex; flex: 1; min-height: 0; }
.toolbox { width: 40px; padding-top: 7px; border-right: 1px solid #b4b4b4; background: linear-gradient(90deg, #f9f9f9, #ededed); display: flex; flex-direction: column; align-items: center; height: 914px; }
.hgrip { width: 17px; height: 5px; margin-bottom: .5px; background: radial-gradient(circle, #b0b0b0 .7px, transparent .9px) 0 0 / 3px 2.500px; flex: none; }
.toolbox b { width: 32px; height: 32.050px; display: flex; align-items: center; justify-content: center; flex: none; }
.toolbox b.on { height: 30px; margin: 1px 0; border: 1px solid #ababab; border-radius: 3px; background: #dcdcdc; }

.view { width: 1411px; display: grid; grid-template: 22px 1fr / 21px 1fr; border-bottom: 1px solid #b4b4b4; flex: none; overflow: hidden; }
.hruler { grid-column: 1 / 3; }
.hruler text, .vruler text { font-size: 10.670px; fill: #555; }
.canvas { background: #d7d7d7; padding: 56px 0 0 145px; }
.paper { width: 1100px; height: 778px; background: #fff; box-shadow: 8.500px 8.500px 0 -.5px #969696; padding: 56px 0 0 55px; }
.mapitem { display: grid; width: 741px; height: 647px; }
.mapitem > * { grid-area: 1 / 1; }
.over { overflow: visible; }

.vsplit { width: 6px; display: flex; align-items: center; justify-content: center; flex: none; padding-top: 6px; }
.vsplit i { width: 1px; height: 17px; background: repeating-linear-gradient(#aaa 0 1px, transparent 1px 3px); }

.docks { flex: 1; display: flex; flex-direction: column; min-width: 0; }
.tabs { height: 29px; display: flex; align-items: flex-end; border-bottom: 1px solid #b4b4b4; padding-top: 1px; flex: none; }
.tabs span { height: 25px; line-height: 25px; border: 1px solid #b4b4b4; border-bottom: 0; background: linear-gradient(#d9d9d9, #dfdfdf); border-radius: 3px 3px 0 0; text-align: center; margin-left: -1px; }
.tabs span:first-child { margin-left: 0; }
.tabs .active { height: 28px; line-height: 27px; margin-bottom: -1px; background: linear-gradient(#fafafa, #efefef); }
.t1 { width: 62px; } .t2 { width: 109px; } .t3 { width: 70px; } .t4 { width: 125px; } .t5 { width: 69px; }
.docktitle { height: 20px; display: flex; align-items: center; gap: 3px; padding: 0 2px 0 4px; flex: none; }
.docktitle svg:first-of-type { margin-left: auto; }
.tree { height: 137px; border: 1px solid #b4b4b4; background: #fff; flex: none; }
.thead { height: 21px; display: flex; background: linear-gradient(#fbfbfb, #eaeaea); border-bottom: 1px solid #b4b4b4; align-items: stretch; }
.thead span { display: flex; align-items: center; border-right: 1px solid #cfcfcf; }
.thead .c1 { width: 32px; padding-left: 2px; } .thead .c2 { width: 32px; padding-left: 4px; } .thead .c3 { padding-left: 2px; border: 0; }
.trow { display: flex; align-items: center; height: 18px; padding-left: 3px; }
.trow .cb + .cb { margin: 0 18px; }
.trow strong { margin: -1px 0 0 6px; }
.cb { width: 14px; height: 14px; border: 1px solid #b9b9b9; background: #fff; flex: none; display: block; }
.cb.on::after { content: ""; display: block; width: 4px; height: 8px; margin: 0 0 0 3px; border: solid #111; border-width: 0 2px 2px 0; transform: rotate(35deg); }
.hsplit { height: 4px; display: flex; justify-content: center; align-items: center; flex: none; }
.hsplit i { width: 17px; height: 1px; background: repeating-linear-gradient(90deg, #aaa 0 1px, transparent 1px 3px); }
.hsplit + .tabs { height: 30px; }
.itemname { height: 21px; background: #c6c6c6; font-weight: bold; line-height: 21px; padding-left: 6px; flex: none; }
.ptools { height: 31px; display: flex; align-items: center; gap: 9.700px; padding: 0 0 2px 8px; flex: none; }
.ptools svg { width: 16px; height: 16px; }
.ptools i { width: 1px; height: 12px; background: #d0d0d0; margin: 0 -2.500px; }

.props { flex: 1; min-height: 0; display: flex; border: 1px solid #b4b4b4; border-right: 0; }
.plist { flex: 1; overflow: hidden; padding: 9px 12px 0; }
.plist h2 { height: 23px; line-height: 27px; display: flex; align-items: center; gap: 10px; padding-left: 1px; }
.plist h2::before { content: ""; border: solid transparent; border-width: 8px 5.500px 0; border-top-color: #3a3a3a; margin-top: 2px; }
.group { border: 1px solid #d4d4d4; border-radius: 2px; background: #ebebeb; padding: 12px 12px 0; }
.g1 { height: 146px; margin-bottom: 4px; } .g2 { height: 113px; margin-bottom: 5px; } .g3 { height: 149px; margin-bottom: 1px; }
.line { height: 32px; display: flex; align-items: center; white-space: nowrap; }
.g1 .line:first-child { height: 26px; margin-bottom: 4px; }
.g1 .line:nth-child(2) { height: 30px; margin-bottom: .5px; }
.g1 .line:nth-child(4) { height: 30px; }
.line label { width: 89px; flex: none; }
.group.g2 { padding-top: 8px; }
.group.g3 { padding-top: 9px; }
.g3 .line label { width: 48px; }
.line .cb { margin-right: 5px; }
.input { width: 272px; height: 25px; line-height: 22px; border: 1px solid #ababab; border-radius: 3px; background: #fff; padding-left: 3px; box-shadow: inset 0 1px #e6e6e6; }
.g3 .input { width: 313px; }
.spin { display: flex; padding-left: 5px; height: 24px; }
.spin em { margin-left: auto; width: 14px; border-left: 1px solid #b4b4b4; display: flex; flex-direction: column; align-items: center; justify-content: center; gap: 5px; }
.dd { width: 24px; height: 18px; margin-left: 8px; }
.combo { width: 242px; height: 26px; border: 1px solid #ababab; border-radius: 3px; background: linear-gradient(#fdfdfd, #ebebeb); padding-left: 4px; display: flex; align-items: center; }
.combo q { flex: 1; overflow: hidden; margin-right: 7px; }
.combo::after { content: ""; border: solid transparent; border-width: 4px 4px 0; border-top-color: #555; margin-right: 7px; }
.theme { width: 177px; margin-left: auto; }
.theme + .dd, .eye + .dd { margin-right: 4px; }
.btn { width: 24px; height: 23px; border: 1px solid #b4b4b4; border-radius: 3px; background: linear-gradient(#fff, #ededed); margin-left: 6px; display: flex; align-items: center; justify-content: center; }
.btn.eye { margin-left: auto; --iris: #5f8fc0; }
.dis { color: #b8b8b8; }
.dis .cb { background: #efefef; }
.plist h3 { height: 28px; display: flex; align-items: center; padding-left: 4px; }
.plist h3::before { content: ""; border: solid transparent; border-width: 6.500px 0 6.500px 7px; border-left-color: #3a3a3a; margin-right: 10px; }
.plist h3.dis::before { border-left-color: #b0b0b0; }
.plist h3 .cb { margin: 0 9px 0 -2px; }
.scroll { width: 15px; border-left: 1px solid #b4b4b4; border-right: 1px solid #b4b4b4; display: flex; flex-direction: column; background: #dedede; }
.scroll em { height: 14px; background: #fbfbfb; display: flex; align-items: center; justify-content: center; flex: none; }
.up { border-bottom: 1px solid #b4b4b4; } .down { border-top: 1px solid #b4b4b4; }
.up::after { content: ""; border: solid transparent; border-width: 0 3.500px 4px; border-bottom-color: #444; }
.down::after { content: ""; border: solid transparent; border-width: 4px 3.500px 0; border-top-color: #444; }
.thumb { height: 331px; background: linear-gradient(90deg, #fff, #f2f2f2); border-bottom: 1px solid #b4b4b4; }
.track { flex: 1; }

.status { height: 30px; display: flex; align-items: center; flex: none; padding-left: 1360px; white-space: nowrap; }
.sx { width: 106px; } .sy { width: 106px; } .sp { width: 106px; }
.zoom { width: 135px; height: 25px; border: 1px solid #ababab; border-radius: 3px; background: #fff; display: flex; margin-top: 1px; }
.zoom span { flex: 1; padding: 4px 3px; }
.zoom em { width: 21px; border-left: 1px solid #b4b4b4; background: linear-gradient(#fff, #eee); display: flex; align-items: center; justify-content: center; }
.slider { width: 99px; height: 6px; margin-left: 7px; border: 1px solid #b4b4b4; border-radius: 3px; background: linear-gradient(90deg, #3d9be0 10px, #dcdcdc 10px); display: flex; align-items: center; padding-left: 7px; }
.slider i { width: 13px; height: 13px; border: 1px solid #a8a8a8; border-radius: 3px; background: #fafafa; flex: none; }
```

FILE: main.js
```js
const NS = 'http://www.w3.org/2000/svg';
function add(parent, tag, attrs, text) {
  const e = document.createElementNS(NS, tag);
  for (const k in attrs) e.setAttribute(k, attrs[k]);
  if (text !== undefined) e.textContent = text;
  parent.appendChild(e);
}

// Rulers: 3.7 px per millimetre, a tick every 2 mm
const MM = 3.7012;
const hr = document.getElementById('hruler');
for (let mm = -38; mm <= 336; mm += 2) {
  const x = Math.floor(166 + mm * MM) + 0.5;
  const len = mm % 20 === 0 ? 21 : mm % 10 === 0 ? 7 : 5;
  add(hr, 'path', { d: `M${x} ${22 - len}v${len}`, stroke: '#3a3a3a' });
  if (mm % 20 === 0) add(hr, 'text', { x: x + 2, y: 13 }, mm);
}
add(hr, 'path', { d: 'M1392.500 1v21', stroke: '#e00' });
const vr = document.getElementById('vruler');
for (let mm = -14; mm <= 224; mm += 2) {
  const y = Math.floor(56 + mm * MM) + 0.5;
  const len = mm % 20 === 0 ? 21 : mm % 10 === 0 ? 7 : 5;
  add(vr, 'path', { d: `M${21 - len} ${y}h${len}`, stroke: '#3a3a3a' });
  if (mm % 20 === 0) add(vr, 'text', { transform: `translate(12 ${y + 3.5}) rotate(-90)`, 'text-anchor': 'end' }, mm);
}
add(vr, 'path', { d: 'M0 355.500h21', stroke: '#e00' });

// District boundary, in survey tiles: [origin x, origin y, points], three units per pixel
const boundary = [
  [-6, 267, '78,308 82,292 90,280 95,262 99,240 102,215 106,212 110,216 106,240 103,262 100,278 108,290 114,275 120,290 130,278 137,265 143,240 150,215 160,205 148,196 162,192 150,184 166,182 148,174 162,170 172,160 182,155 195,158 210,150 230,128 235,100 238,84 250,74 275,73 296,77 308,88 313,105 308,122 295,140 283,155 279,172 284,190 296,204 310,207 335,207 365,206 380,202 397,200 402,208 395,218 380,228 390,240 405,247 425,243 440,236 455,230 465,245 480,253 495,252 503,240 508,222 520,217 532,224 545,240 560,236 575,231 590,234 605,248 620,265 635,278 635,292 650,297 665,290 680,280 700,271 720,280 740,281 760,288 790,302 810,298 830,295 850,297 868,312 880,290 895,272 915,266 940,277 955,275 975,264 1000,255 1018,256 1018,280 1025,300 1040,325 1048,350 1050,368 1068,371'],
  [1074, 327, '0,311 20,317 45,334 70,348 95,362 115,371 145,374 152,382 156,402 190,405 200,393 208,375 220,378 245,393 268,401 285,385 310,394 330,388 345,373 356,377 365,382 362,345 374,310 374,265 367,235 375,215 390,195 394,162 430,152 445,130 453,115 450,104 480,102 515,90 520,65 528,43 570,41 620,45 680,48 720,58 755,66 770,60 774,35 772,16 800,21 820,24 840,38 862,43 885,25 920,33 945,37 965,28 985,19 1000,32 1020,42 1034,45 1034,90 1034,140 1048,155 1062,175 1062,205 1055,235 1044,247 1025,240 1000,242 982,241 985,262 995,295 998,325 990,350 980,367 950,378 935,400 940,422 910,425 890,440 883,458 886,480 875,502 848,516 848,545 838,585 835,620 815,665 850,680 885,685 910,712 914,740 930,768 930,798 948,815 948,895 940,905 900,907 830,909 822,890 800,882 790,897 745,902 725,875 705,856 680,850 655,850 640,872 620,885 585,895 555,917 520,940 485,958 495,985 510,1000 512,1030 525,1060 529,1090 525,1125 515,1137 480,1136 452,1138 430,1115 412,1085 408,1045 395,1030 387,1005 392,985 385,962 360,945 356,915 348,903 320,898 300,889 280,895 262,915 255,940 240,970 222,1005 208,1008 205,1025 190,1033 160,1030 140,1012 115,1000 95,975 80,958 58,950'],
  [-6, 1047, '1125,248 1115,262 1112,282 1090,300 1065,320 1030,332 1013,332 1025,346 1005,360 992,380 965,382 965,405 955,418 925,422 900,440 878,464 850,466 825,486 800,476 770,472 735,484 710,482 690,470 676,463 668,480 660,520 655,535 630,540 590,543 550,542 520,538 500,535 490,520 505,512 503,490 488,465 465,443 430,430 405,410 380,395 350,387 335,391 323,405 330,420 350,440 362,460 362,490 375,525 378,560 395,590 408,640 418,680 420,700 412,714 404,724 402,716 392,680 372,635 360,590 340,545 320,490 300,440 285,395 265,335 255,290 240,250 225,205 208,150 200,125 196,100 190,82 196,65 194,0'],
  [-6, 267, '190,750 182,690 170,620 155,555 140,500 125,450 112,400 100,350 85,328']
];
const pts = boundary.flatMap(([ox, oy, s]) => s.split(' ').map(p => {
  const [x, y] = p.split(',').map(Number);
  return [(x + ox) / 3, (y + oy) / 3];
}));
const d = 'M' + pts.map(p => p[0].toFixed(1) + ' ' + p[1].toFixed(1)).join('L') + 'Z';
document.getElementById('outline').setAttribute('d', d);

// Building cells, coloured on the viridis ramp
let seed = 20211;
const rnd = () => ((seed = (seed * 1664525 + 1013904223) >>> 0) / 4294967296);
const ramp = [[68, 1, 84], [71, 44, 122], [59, 81, 139], [44, 113, 142], [33, 144, 141], [39, 173, 129], [92, 200, 99], [170, 220, 50], [253, 231, 37]];
function colour(t) {
  t = Math.max(0, Math.min(0.999, t)) * 8;
  const i = Math.floor(t), f = t - i;
  return 'rgb(' + ramp[i].map((c, k) => Math.round(c + (ramp[i + 1][k] - c) * f)).join(',') + ')';
}
function lattice(w, h) { return Array.from({ length: w * h }, rnd); }
const grids = { 5: lattice(160, 140), 17: lattice(50, 50), 45: lattice(20, 20) };
function noise(x, y, s) {
  const w = { 5: 160, 17: 50, 45: 20 }[s], g = grids[s];
  const gx = x / s, gy = y / s, i = Math.floor(gx), j = Math.floor(gy), a = gx - i, b = gy - j, k = j * w + i;
  return g[k] * (1 - a) * (1 - b) + g[k + 1] * a * (1 - b) + g[k + w] * (1 - a) * b + g[k + w + 1] * a * b;
}
function interp(table, x) {
  for (let i = 1; i < table.length; i++) {
    if (x <= table[i][0]) {
      const [x0, v0] = table[i - 1], [x1, v1] = table[i];
      return v0 + (v1 - v0) * (x - x0) / (x1 - x0);
    }
  }
  return table[table.length - 1][1];
}
const density = [[0, .19], [150, .18], [230, .145], [330, .11], [400, .1], [470, .08], [500, .045], [570, .03], [600, .008], [740, .002]];
const tone = [[0, .2], [90, .235], [140, .265], [180, .33], [230, .43], [280, .53], [320, .64], [360, .76], [430, .79], [470, .74], [740, .7]];
// x, y, radius, density, tone
const clusters = [
  [31, 195, 10, .5, .94], [45, 187, 9, .35, .8], [68, 239, 19, .32, .77], [96, 236, 12, .25, .48],
  [688, 126, 10, .75, 1], [686, 147, 8, .5, 1], [671, 149, 10, .4, .48], [691, 161, 15, .32, .62], [703, 176, 9, .2, .32], [655, 186, 13, .2, .33], [652, 178, 8, .3, .6],
  [558, 181, 30, .16, .84], [508, 217, 19, .2, .8], [525, 187, 12, .1, .8], [545, 150, 16, .09, .65], [610, 140, 16, .06, .75],
  [371, 225, 16, .36, .86], [382, 265, 26, .28, .78], [405, 290, 28, .24, .79], [378, 342, 32, .26, .8], [431, 332, 22, .25, .86], [418, 266, 11, .28, .9],
  [468, 270, 6, .3, .92], [468, 284, 6, .3, .92], [466, 312, 6, .32, .94], [465, 339, 13, .28, .5], [455, 268, 13, .2, .55], [471, 246, 14, .28, .88], [440, 245, 12, .26, .9], [475, 359, 14, .26, .76], [411, 365, 16, .25, .64], [373, 392, 15, .26, .8], [375, 320, 12, .2, .64],
  [581, 300, 20, .13, .67], [325, 369, 14, .3, .93], [338, 329, 10, .28, .88], [410, 440, 24, .1, .86],
  [251, 391, 13, .2, .74], [200, 446, 9, .25, .72], [208, 502, 16, .22, .7], [278, 195, 10, .26, .7], [265, 235, 30, .1, .65], [268, 418, 6, .5, .22],
  [570, 395, 26, .07, .74], [615, 255, 22, .04, .4], [530, 300, 28, .06, .68], [485, 300, 20, .07, .7]
];
const ctx = document.getElementById('dots').getContext('2d');
const land = new Path2D(d);
for (let y = 36; y < 600; y++) {
  for (let x = 18; x < 716; x++) {
    const n = noise(x, y, 5), m = noise(x, y, 17), b = noise(x, y, 45);
    // the coastal tone follows the shoreline as it runs south-east
    const tx = y > 380 ? x - (y - 380) * .22 : x;
    let p = interp(density, x) * Math.pow(n, 1.5) * (0.3 + 1.4 * m) * (0.55 + .9 * b) * 1.75;
    let t = interp(tone, tx) + (m - .5) * .16 + (b - .5) * (tx > 110 ? .16 : .04) + (rnd() - .5) * (tx > 140 ? .13 : .06);
    if (x > 560 && y > 350) p *= 0.4;
    if (x > 600 && y > 330) p = 0;
    if (x > 470 && y > 400) { p = .035; t = .74; }
    for (const [cx, cy, r, cd, ct] of clusters) {
      const q = Math.hypot(x - cx, y - cy) / r + (m - .5) * .5;
      if (q < 1.2) {
        const w = cd * Math.min(1, Math.max(0, 1.2 - q)) * (0.25 + 1.3 * n * n);
        if (w > p * .5) { p = Math.max(w, p * .3); t = ct + (rnd() - .5) * .06; }
      }
    }
    if (rnd() < p && ctx.isPointInPath(land, x + .5, y + .5)) {
      ctx.fillStyle = colour(t);
      ctx.fillRect(x, y, rnd() < .3 ? 2 : 1, rnd() < .2 ? 2 : 1);
    }
  }
}

// Health facilities
const pois = document.getElementById('pois');
for (const [x, y] of [[62.700, 169.300], [104.300, 160.300], [92.300, 198.300], [70.700, 217], [43.700, 234.300], [49, 250.700], [79.300, 258.700], [140.300, 267], [160.300, 289.300], [191.700, 288.300], [265.300, 218], [261.700, 268], [70.300, 303], [106.700, 312.700], [355.300, 321.300], [105.300, 369.300], [166.300, 367], [615.700, 322.300], [507, 455.300]]) {
  add(pois, 'use', { href: '#poi', x, y });
}
```
